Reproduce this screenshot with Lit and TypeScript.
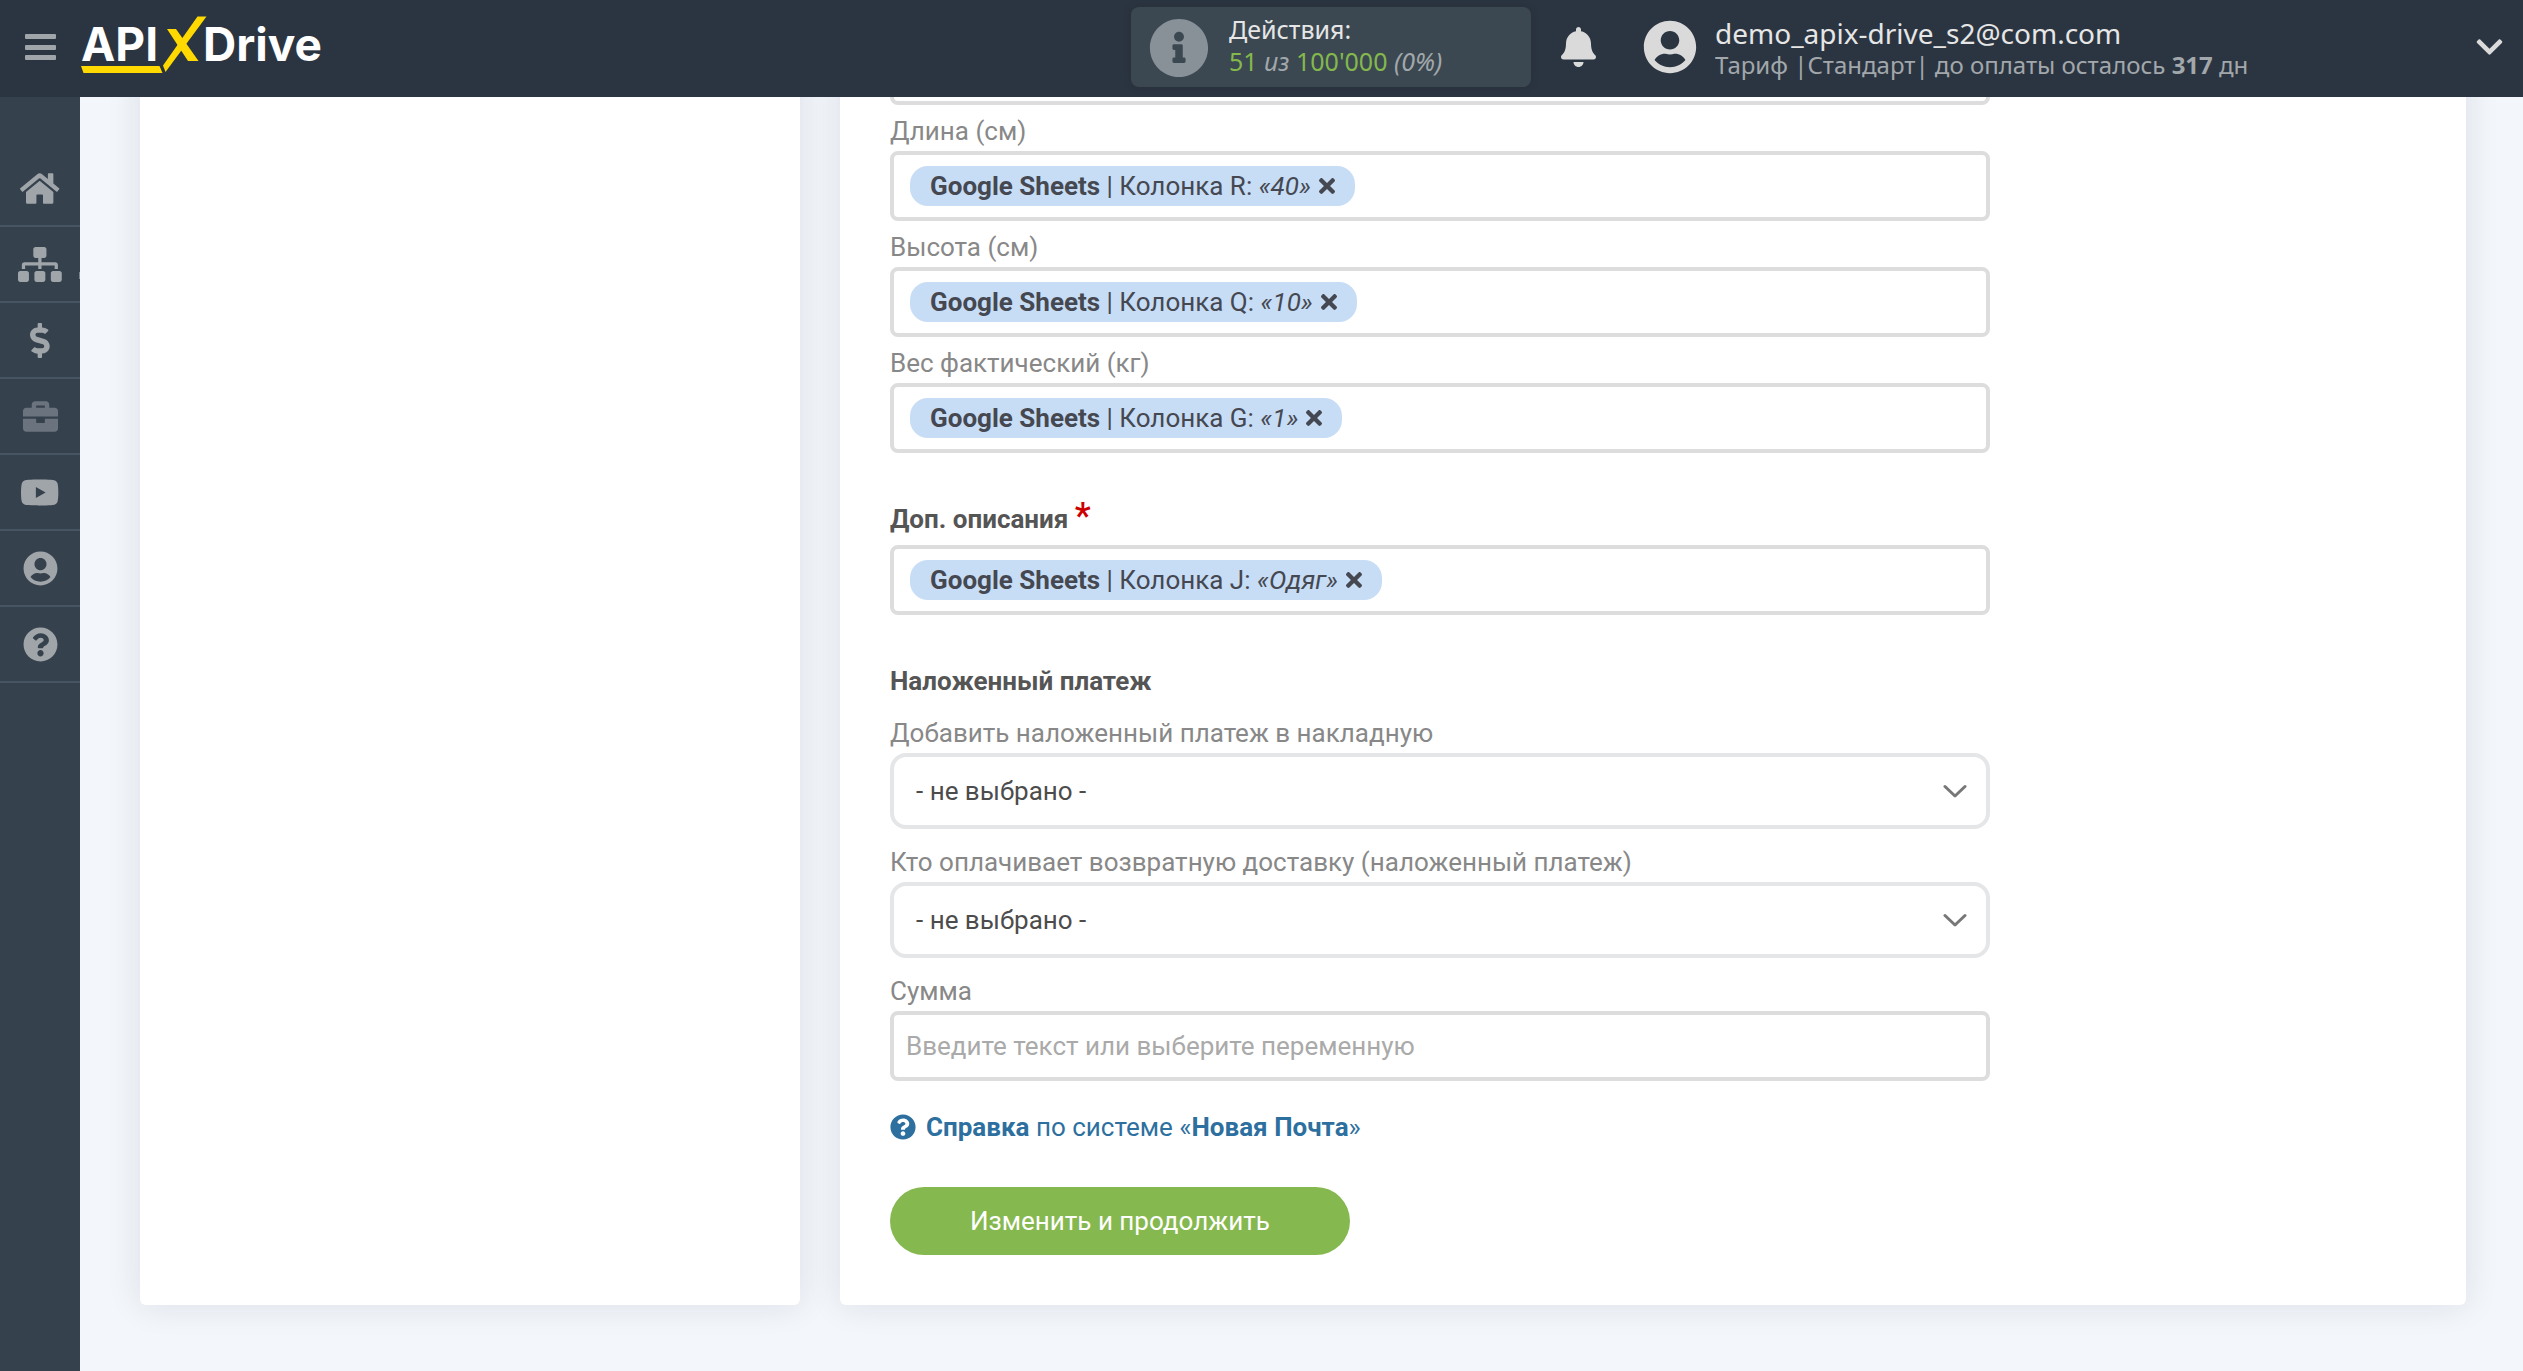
import { LitElement, html, css, svg, nothing } from "lit";
import { customElement, property } from "lit/decorators.js";

interface Glyph {
  box: string;
  path: string;
}

const GLYPHS: Record<string, Glyph> = {
  home: {
    box: "0 0 576 512",
    path: "M488 312.7V456c0 13.3-10.7 24-24 24H348c-6.6 0-12-5.4-12-12V356c0-6.6-5.4-12-12-12h-72c-6.6 0-12 5.4-12 12v112c0 6.6-5.4 12-12 12H112c-13.3 0-24-10.7-24-24V312.7c0-3.6 1.6-7 4.4-9.3l188-154.8c4.4-3.6 10.8-3.6 15.3 0l188 154.8c2.7 2.3 4.3 5.7 4.3 9.3zm83.6-60.9L488 183V44.4c0-6.6-5.4-12-12-12h-56c-6.6 0-12 5.4-12 12V117l-89.5-73.7c-17.7-14.6-43.3-14.6-61 0L4.4 251.8c-5.1 4.2-5.8 11.8-1.6 16.9l25.5 31c4.2 5.1 11.8 5.8 16.9 1.6l235.2-193.7c4.4-3.6 10.8-3.6 15.3 0l235.2 193.7c5.1 4.2 12.7 3.5 16.9-1.6l25.5-31c4.2-5.2 3.4-12.7-1.7-16.9z",
  },
  sitemap: {
    box: "0 0 640 512",
    path: "M128 352H32c-17.67 0-32 14.33-32 32v96c0 17.67 14.33 32 32 32h96c17.67 0 32-14.33 32-32v-96c0-17.67-14.33-32-32-32zm-24-80h192v48h48v-48h192v48h48v-57.59c0-21.17-17.23-38.41-38.41-38.41H344v-64h40c17.67 0 32-14.33 32-32V32c0-17.67-14.33-32-32-32H256c-17.67 0-32 14.33-32 32v96c0 17.67 14.33 32 32 32h40v64H94.41C73.23 224 56 241.23 56 262.41V320h48v-48zm264 80h-96c-17.67 0-32 14.33-32 32v96c0 17.67 14.33 32 32 32h96c17.67 0 32-14.33 32-32v-96c0-17.67-14.33-32-32-32zm240 0h-96c-17.67 0-32 14.33-32 32v96c0 17.67 14.33 32 32 32h96c17.67 0 32-14.33 32-32v-96c0-17.67-14.33-32-32-32z",
  },
  dollar: {
    box: "0 0 288 512",
    path: "M209.2 233.4l-108-31.6C88.7 198.2 80 186.5 80 173.5c0-16.3 13.2-29.5 29.5-29.5h66.3c12.2 0 24.2 3.7 34.2 10.5 6.1 4.1 14.3 3.1 19.5-2l34.8-34c7.1-6.9 6.1-18.4-1.8-24.5C238 74.8 207.4 64.1 176 64V16c0-8.8-7.2-16-16-16h-32c-8.8 0-16 7.2-16 16v48h-2.5C45.8 64-5.4 118.7.5 183.6c4.2 46.1 39.4 83.6 83.8 96.6l102.5 30c12.5 3.7 21.2 15.3 21.2 28.3 0 16.3-13.2 29.5-29.5 29.5h-66.3C100 368 88 364.3 78 357.5c-6.1-4.1-14.3-3.1-19.5 2l-34.8 34c-7.1 6.9-6.1 18.4 1.8 24.5 24.5 19.2 55.1 29.9 86.5 30v48c0 8.8 7.2 16 16 16h32c8.8 0 16-7.2 16-16v-48.2c46.6-.9 90.3-28.6 105.7-72.7 21.5-61.6-14.6-124.8-72.5-141.7z",
  },
  briefcase: {
    box: "0 0 512 512",
    path: "M320 336c0 8.84-7.16 16-16 16h-96c-8.84 0-16-7.16-16-16v-48H0v144c0 25.6 22.4 48 48 48h416c25.6 0 48-22.4 48-48V288H320v48zm144-208h-80V80c0-25.6-22.4-48-48-48H176c-25.6 0-48 22.4-48 48v48H48c-25.6 0-48 22.4-48 48v80h512v-80c0-25.6-22.4-48-48-48zm-144 0H192V96h128v32z",
  },
  video: {
    box: "0 0 576 512",
    path: "M549.655 124.083c-6.281-23.65-24.787-42.276-48.284-48.597C458.781 64 288 64 288 64S117.22 64 74.629 75.486c-23.497 6.322-42.003 24.947-48.284 48.597-11.412 42.867-11.412 132.305-11.412 132.305s0 89.438 11.412 132.305c6.281 23.65 24.787 41.5 48.284 47.821C117.22 448 288 448 288 448s170.78 0 213.371-11.486c23.497-6.321 42.003-24.171 48.284-47.821 11.412-42.867 11.412-132.305 11.412-132.305s0-89.438-11.412-132.305zm-317.51 213.508V175.185l142.739 81.205-142.739 81.201z",
  },
  user: {
    box: "-8 0 512 512",
    path: "M248 8C111 8 0 119 0 256s111 248 248 248 248-111 248-248S385 8 248 8zm0 96c48.6 0 88 39.4 88 88s-39.4 88-88 88-88-39.4-88-88 39.4-88 88-88zm0 344c-58.7 0-111.3-26.6-146.5-68.2 18.8-35.4 55.6-59.8 98.5-59.8 2.4 0 4.8.4 7.1 1.1 13 4.2 26.6 6.9 40.9 6.9 14.3 0 28-2.7 40.9-6.9 2.3-.7 4.7-1.1 7.1-1.1 42.9 0 79.7 24.4 98.5 59.8C359.3 421.4 306.7 448 248 448z",
  },
  question: {
    box: "0 0 512 512",
    path: "M504 256c0 136.997-111.043 248-248 248S8 392.997 8 256C8 119.083 119.043 8 256 8s248 111.083 248 248zM262.655 90c-54.497 0-89.255 22.957-116.549 63.758-3.536 5.286-2.353 12.415 2.715 16.258l34.699 26.31c5.205 3.947 12.621 3.008 16.665-2.122 17.864-22.658 30.113-35.797 57.303-35.797 20.429 0 45.698 13.148 45.698 32.958 0 14.976-12.363 22.667-32.534 33.976C247.128 238.528 216 254.941 216 296v4c0 6.627 5.373 12 12 12h56c6.627 0 12-5.373 12-12v-1.333c0-28.462 83.186-29.647 83.186-106.667 0-58.002-60.165-102-116.531-102zM256 338c-25.365 0-46 20.635-46 46 0 25.364 20.635 46 46 46s46-20.636 46-46c0-25.365-20.635-46-46-46z",
  },
  info: {
    box: "0 0 512 512",
    path: "M256 8C119.043 8 8 119.083 8 256c0 136.997 111.043 248 248 248s248-111.003 248-248C504 119.083 392.957 8 256 8zm0 110c23.196 0 42 18.804 42 42s-18.804 42-42 42-42-18.804-42-42 18.804-42 42-42zm56 254c0 6.627-5.373 12-12 12h-88c-6.627 0-12-5.373-12-12v-24c0-6.627 5.373-12 12-12h12v-64h-12c-6.627 0-12-5.373-12-12v-24c0-6.627 5.373-12 12-12h64c6.627 0 12 5.373 12 12v100h12c6.627 0 12 5.373 12 12v24z",
  },
  bell: {
    box: "0 0 448 512",
    path: "M224 512c35.32 0 63.97-28.65 63.97-64H160.03c0 35.35 28.65 64 63.97 64zm215.39-149.71c-19.32-20.76-55.47-51.99-55.47-154.29 0-77.7-54.48-139.9-127.94-155.16V32c0-17.67-14.32-32-31.98-32s-31.98 14.33-31.98 32v20.84C118.56 68.1 64.08 130.3 64.08 208c0 102.3-36.15 133.53-55.47 154.29-6 6.45-8.66 14.16-8.61 21.71.11 16.4 12.98 32 32.1 32h383.8c19.12 0 32-15.6 32.1-32 .05-7.55-2.61-15.27-8.61-21.71z",
  },
  chevron: {
    box: "0 0 448 512",
    path: "M207.029 381.476L12.686 187.132c-9.373-9.373-9.373-24.569 0-33.941l22.667-22.667c9.357-9.357 24.522-9.375 33.901-.04L224 284.505l154.745-154.021c9.379-9.335 24.544-9.317 33.901.04l22.667 22.667c9.373 9.373 9.373 24.569 0 33.941L240.971 381.476c-9.373 9.372-24.569 9.372-33.942 0z",
  },
  times: {
    box: "0 80 352 352",
    path: "M242.72 256l100.07-100.07c12.28-12.28 12.28-32.19 0-44.48l-22.24-22.24c-12.28-12.28-32.19-12.28-44.48 0L176 189.28 75.93 89.21c-12.28-12.28-32.19-12.28-44.48 0L9.21 111.45c-12.28 12.28-12.28 32.19 0 44.48L109.28 256 9.21 356.07c-12.28 12.28-12.28 32.19 0 44.48l22.24 22.24c12.28 12.28 32.2 12.28 44.48 0L176 322.72l100.07 100.07c12.28 12.28 32.2 12.28 44.48 0l22.24-22.24c12.28-12.28 12.28-32.19 0-44.48L242.72 256z",
  },
};

const icon = (name: string, cls: string) => html`
  <svg class=${cls} viewBox=${GLYPHS[name].box} aria-hidden="true">
    ${svg`<path fill="currentColor" d=${GLYPHS[name].path}></path>`}
  </svg>
`;

@customElement("token-field")
export class TokenField extends LitElement {
  @property() label = "";
  @property() heading = "";
  @property() column = "";
  @property() value = "";
  @property() hint = "";

  static styles = css`
    :host {
      display: block;
    }
    .label {
      display: block;
      padding-top: 6px;
      line-height: 40px;
      color: #888;
    }
    .heading {
      display: block;
      margin-top: 40px;
      line-height: 52px;
      font-weight: 700;
      color: #555;
    }
    .star {
      font-size: 36px;
      font-weight: 500;
      line-height: 0;
      color: #c00;
    }
    .box {
      display: flex;
      align-items: center;
      gap: 8px;
      box-sizing: border-box;
      height: 70px;
      border: 4px solid #ddd;
      border-radius: 8px;
      background: #fff;
    }
    .chip {
      display: flex;
      align-items: center;
      flex: none;
      margin-left: 16px;
      height: 40px;
      padding: 0 20px;
      border-radius: 18px;
      background: #c7dcf5;
      color: #454851;
      white-space: nowrap;
    }
    .remove {
      display: flex;
      margin-left: 8px;
      padding: 0;
      border: 0;
      background: none;
      color: inherit;
    }
    .cross {
      width: 16px;
      height: 16px;
    }
    .entry {
      flex: 1;
      min-width: 0;
      height: 100%;
      padding: 0 12px;
      border: 0;
      outline: 0;
      background: none;
      font: inherit;
      color: #555;
    }
    .entry::placeholder {
      color: #aaa;
      opacity: 1;
    }
  `;

  render() {
    return html`
      ${this.heading
        ? html`<label class="heading" for="entry">${this.heading} <span class="star">*</span></label>`
        : nothing}
      ${this.label ? html`<label class="label" for="entry">${this.label}</label>` : nothing}
      <div class="box">
        ${this.column
          ? html`<span class="chip"
              ><span><b>Google Sheets</b> | Колонка ${this.column}: <i>«${this.value}»</i></span
              ><button class="remove" type="button">${icon("times", "cross")}</button></span
            >`
          : nothing}
        <input class="entry" id="entry" type="text" placeholder=${this.hint} />
      </div>
    `;
  }
}

@customElement("choice-field")
export class ChoiceField extends LitElement {
  @property() label = "";

  static styles = css`
    :host {
      display: block;
      margin-bottom: 7px;
    }
    .label {
      display: block;
      padding-top: 6px;
      line-height: 40px;
      color: #888;
    }
    .wrap {
      display: grid;
      align-items: center;
    }
    .select {
      grid-area: 1 / 1;
      appearance: none;
      width: 100%;
      height: 76px;
      padding: 0 22px;
      border: 4px solid #e5e6e8;
      border-radius: 16px;
      background: #fff;
      font: inherit;
      color: #4c4c4c;
    }
    .arrow {
      grid-area: 1 / 1;
      justify-self: end;
      margin-right: 23px;
      width: 24px;
      height: 14px;
      pointer-events: none;
    }
  `;

  render() {
    return html`
      <label class="label" for="choice">${this.label}</label>
      <div class="wrap">
        <select class="select" id="choice">
          <option>- не выбрано -</option>
        </select>
        <svg class="arrow" viewBox="0 0 24 14" aria-hidden="true">
          <path d="M2 2.500 L12 12 L22 2.500" fill="none" stroke="#777" stroke-width="3" stroke-linecap="round" stroke-linejoin="round"></path>
        </svg>
      </div>
    `;
  }
}

@customElement("top-bar")
export class TopBar extends LitElement {
  static styles = css`
    :host {
      display: flex;
      align-items: center;
      height: 97px;
      padding: 0 20px 3px 25px;
      box-sizing: border-box;
      background: #2b3541;
      font-family: "Noto Sans", "Open Sans", sans-serif;
      color: #e6e6e6;
    }
    .plain {
      display: flex;
      padding: 0;
      border: 0;
      background: none;
      color: inherit;
    }
    .bars {
      width: 31px;
      height: 27px;
    }
    .brand {
      display: flex;
      margin-left: 20px;
    }
    .logo {
      width: 254px;
      height: 94px;
    }
    .wordmark {
      font-family: Inter, sans-serif;
      font-size: 46px;
      font-weight: 700;
      fill: #fff;
    }
    .actions {
      display: flex;
      align-items: center;
      gap: 20px;
      box-sizing: border-box;
      width: 400px;
      height: 80px;
      margin-left: auto;
      padding: 0 18px 4px;
      border-radius: 8px;
      background: #3b4851;
      box-shadow: 0 0 10px rgba(0, 0, 0, 0.12);
    }
    .info {
      width: 60px;
      height: 60px;
      margin-top: 6px;
      color: #899198;
    }
    .lines {
      display: flex;
      flex-direction: column;
      white-space: nowrap;
    }
    .count {
      font-size: 25px;
      line-height: 32px;
    }
    .muted {
      color: #a2a7ab;
    }
    .num {
      font-style: normal;
      color: #84b84c;
    }
    .bell {
      width: 35px;
      height: 40px;
      margin-left: 30px;
      color: #dadada;
    }
    .account {
      display: flex;
      align-items: center;
      gap: 18px;
      flex: 0 1 860px;
      margin-left: 47px;
      color: inherit;
      text-decoration: none;
    }
    .face {
      width: 54px;
      height: 54px;
      color: #dadada;
    }
    .owner {
      padding-top: 4px;
    }
    .mail {
      font-size: 28px;
      line-height: 32px;
    }
    .plan {
      font-size: 24px;
      line-height: 32px;
    }
    .down {
      width: 27px;
      height: 30px;
      margin-left: auto;
      color: #dadada;
    }
  `;

  render() {
    return html`
      <button class="plain" type="button">
        <svg class="bars" viewBox="0 0 31 27" aria-hidden="true">
          <g fill="#a0a5a9">
            <rect width="31" height="5" rx="1"></rect>
            <rect y="11" width="31" height="5" rx="1"></rect>
            <rect y="21" width="31" height="5" rx="1"></rect>
          </g>
        </svg>
      </button>
      <a class="brand" href="#">
        <svg class="logo" viewBox="76 0 254 94">
          <text class="wordmark" x="81" y="61">API</text>
          <text class="wordmark" x="203" y="61">Drive</text>
          <g fill="#ffd900">
            <polygon points="81,66 159.500,66 162.500,73 83.500,73"></polygon>
            <polygon points="197.500,16.500 206.500,16.500 165.500,72 163,65.500"></polygon>
            <polygon points="167,29 176,29 198.500,61 188,61"></polygon>
          </g>
        </svg>
      </a>
      <section class="actions">
        ${icon("info", "info")}
        <div class="lines">
          <span class="count">Действия:</span>
          <i class="count muted"><span class="num">51</span> из <span class="num">100'000</span> (0%)</i>
        </div>
      </section>
      <button class="plain" type="button">${icon("bell", "bell")}</button>
      <a class="account" href="#">
        ${icon("user", "face")}
        <div class="lines owner">
          <span class="mail">demo_apix-drive_s2@com.com</span>
          <span class="plan muted">Тариф |Стандарт| до оплаты осталось <b>317</b> дн</span>
        </div>
        ${icon("chevron", "down")}
      </a>
    `;
  }
}

@customElement("side-bar")
export class SideBar extends LitElement {
  static styles = css`
    :host {
      display: block;
      padding-top: 54px;
      background: #36414e;
    }
    .item {
      display: grid;
      place-items: center;
      height: 74px;
      border-bottom: 2px solid #475462;
      color: #a0a5a9;
    }
    .item.dim {
      color: #6b747e;
    }
    /* Edge of the submenu marker, peeking out of the collapsed bar. */
    .item.parent {
      position: relative;
    }
    .item.parent::after {
      content: "";
      position: absolute;
      right: 0;
      bottom: 22px;
      width: 1px;
      height: 7px;
      background: #7c848c;
    }
    .glyph {
      height: 35px;
    }
  `;

  render() {
    const items = [
      { name: "home", state: "" },
      { name: "sitemap", state: "parent" },
      { name: "dollar", state: "" },
      { name: "briefcase", state: "dim" },
      { name: "video", state: "" },
      { name: "user", state: "" },
      { name: "question", state: "" },
    ];
    return html`
      <nav>
        ${items.map((item) => html`<a class="item ${item.state}" href="#">${icon(item.name, "glyph")}</a>`)}
      </nav>
    `;
  }
}

@customElement("app-root")
export class AppRoot extends LitElement {
  static styles = css`
    :host {
      display: grid;
      grid-template: auto minmax(0, 1fr) / 80px minmax(0, 1fr);
      height: 100vh;
      overflow: hidden;
      background: #f3f7fc;
      font-family: Roboto, sans-serif;
      font-size: 26px;
      color: #555;
    }
    .top {
      grid-column: 1 / -1;
    }
    .main {
      display: flex;
      flex-direction: column;
      justify-content: flex-end;
      overflow: hidden;
      padding: 0 57px 66px 60px;
    }
    .columns {
      display: grid;
      flex: none;
      grid-template-columns: 660fr 1626fr;
      gap: 40px;
    }
    .card {
      padding: 50px;
      border-radius: 6px;
      background: #fff;
      box-shadow: 0 0 34px rgba(30, 20, 30, 0.11);
    }
    .form {
      display: flex;
      flex-direction: column;
      max-width: 1100px;
    }
    .heading {
      margin: 40px 0 0;
      font-size: inherit;
      line-height: 52px;
      font-weight: 700;
    }
    .help {
      display: flex;
      align-items: center;
      align-self: flex-start;
      gap: 10px;
      margin-top: 26px;
      line-height: 40px;
      color: #2d709f;
      text-decoration: none;
    }
    .mark {
      width: 26px;
      height: 26px;
    }
    .submit {
      align-self: flex-start;
      height: 68px;
      margin-top: 40px;
      padding: 0 80px;
      border: 0;
      border-radius: 34px;
      background: #86b850;
      font: inherit;
      color: #fff;
    }
  `;

  render() {
    return html`
      <top-bar class="top"></top-bar>
      <side-bar></side-bar>
      <main class="main">
        <div class="columns">
          <section class="card"></section>
          <section class="card">
            <form class="form">
              <token-field></token-field>
              <token-field label="Длина (см)" column="R" value="40"></token-field>
              <token-field label="Высота (см)" column="Q" value="10"></token-field>
              <token-field label="Вес фактический (кг)" column="G" value="1"></token-field>
              <token-field heading="Доп. описания" column="J" value="Одяг"></token-field>
              <h3 class="heading">Наложенный платеж</h3>
              <choice-field label="Добавить наложенный платеж в накладную"></choice-field>
              <choice-field label="Кто оплачивает возвратную доставку (наложенный платеж)"></choice-field>
              <token-field label="Сумма" hint="Введите текст или выберите переменную"></token-field>
              <a class="help" href="#">
                ${icon("question", "mark")}
                <span><b>Справка</b> по системе «<b>Новая Почта</b>»</span>
              </a>
              <button class="submit" type="button">Изменить и продолжить</button>
            </form>
          </section>
        </div>
      </main>
    `;
  }
}
